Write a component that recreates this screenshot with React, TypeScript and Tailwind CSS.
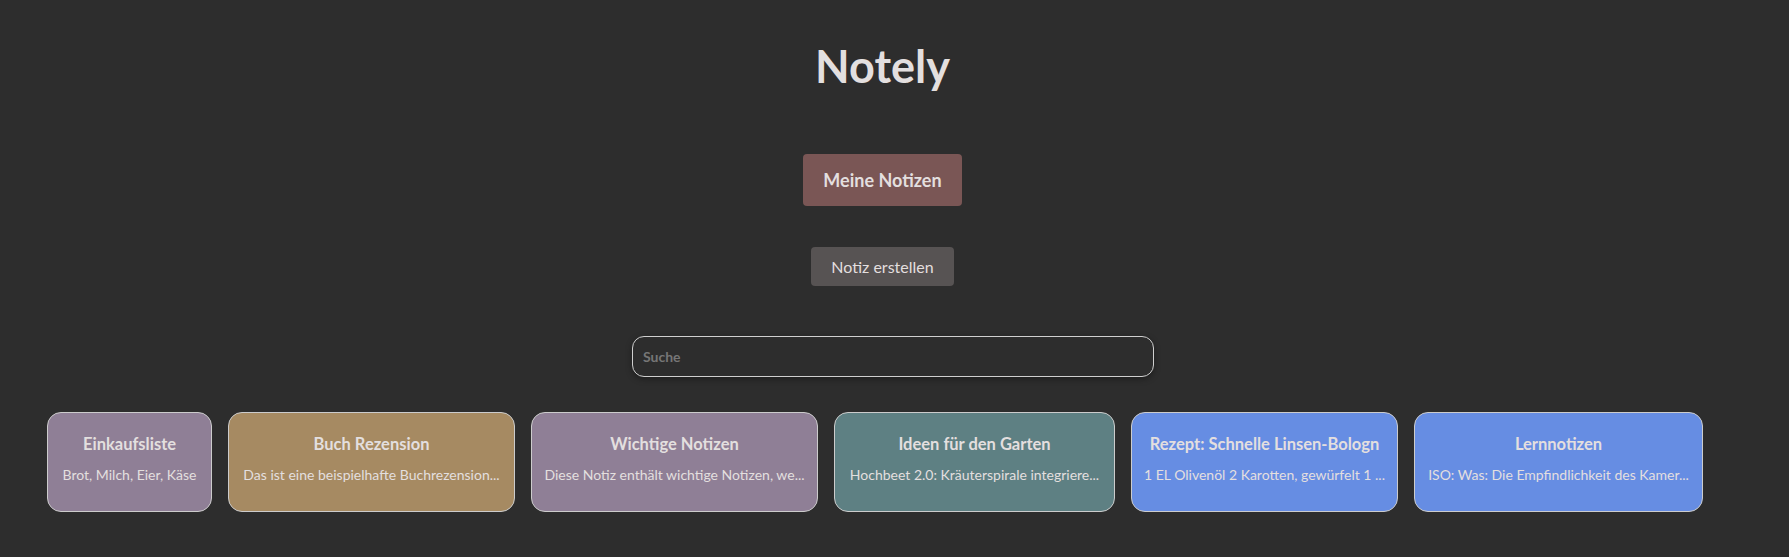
import { useState } from "react";

const notes = [
  {
    title: "Einkaufsliste",
    body: "Brot, Milch, Eier, Käse",
    color: "bg-[#8f7f96]",
    width: "w-[165px]",
  },
  {
    title: "Buch Rezension",
    body: "Das ist eine beispielhafte Buchrezension...",
    color: "bg-[#a68a62]",
    width: "w-[287px]",
  },
  {
    title: "Wichtige Notizen",
    body: "Diese Notiz enthält wichtige Notizen, we...",
    color: "bg-[#8f7f96]",
    width: "w-[287px]",
  },
  {
    title: "Ideen für den Garten",
    body: "Hochbeet 2.0: Kräuterspirale integriere...",
    color: "bg-[#5e8083]",
    width: "w-[281px]",
  },
  {
    title: "Rezept: Schnelle Linsen-Bologn",
    body: "1 EL Olivenöl 2 Karotten, gewürfelt 1 ...",
    color: "bg-[#668de3]",
    width: "w-[267px]",
  },
  {
    title: "Lernnotizen",
    body: "ISO: Was: Die Empfindlichkeit des Kamer...",
    color: "bg-[#668de3]",
    width: "w-[289px]",
  },
];

const App = () => {
  const [search, setSearch] = useState("");

  const filtered = notes.filter(
    (n) =>
      n.title.toLowerCase().includes(search.toLowerCase()) ||
      n.body.toLowerCase().includes(search.toLowerCase())
  );

  return (
    <div className="min-h-[557px] bg-[#2d2d2d] text-[#e3dfdf] font-['Lato','Noto_Sans',sans-serif]">
      <div className="flex flex-col items-center pt-[39px] pr-[24px]">
        <h1 className="text-[45px] leading-[54px] font-bold">Notely</h1>

        <button className="mt-[61px] px-[20px] py-[15px] leading-[22px] text-[18px] font-bold bg-[#7a5655] rounded-[4px]">
          Meine Notizen
        </button>

        <button className="mt-[41px] px-[20px] py-[10px] leading-[19px] text-[16px] bg-[#575353] rounded-[4px]">
          Notiz erstellen
        </button>
      </div>

      <div className="mt-[50px] flex justify-center pr-[3px]">
        <input
          type="text"
          value={search}
          onChange={(e) => setSearch(e.target.value)}
          placeholder="Suche"
          className="w-[522px] h-[41px] px-[10px] rounded-[12px] border border-[#cfcfcf] bg-[#2d2d2d] text-[14px] font-bold text-[#e3dfdf] placeholder-[#767676] shadow-[0_2px_6px_rgba(0,0,0,0.35)] focus:outline-none"
        />
      </div>

      <div className="mt-[35px] pl-[47px] flex gap-4">
        {filtered.map((note, i) => (
          <div
            key={i}
            className={`${note.color} ${note.width} h-[100px] flex-shrink-0 rounded-[14px] border border-[#cccccc] flex flex-col items-center pt-[22px] whitespace-nowrap overflow-hidden`}
          >
            <h3 className="text-[16.5px] leading-[18px] font-bold">
              {note.title}
            </h3>
            <p className="mt-[13px] text-[14px] leading-[18px]">{note.body}</p>
          </div>
        ))}
      </div>
    </div>
  );
};

export default App;
